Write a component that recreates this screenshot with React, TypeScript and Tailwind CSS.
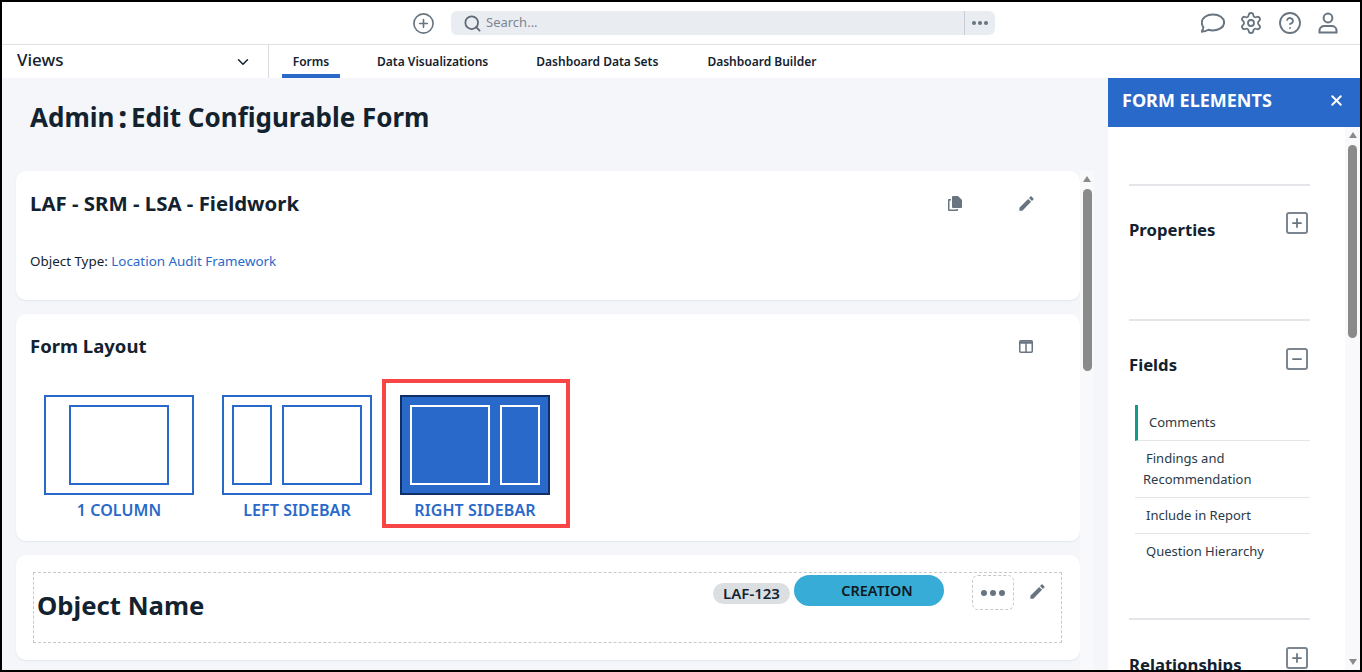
import React from "react";
import { CirclePlus, Search, Settings, CircleHelp, ChevronDown, X, Plus, Minus } from "lucide-react";
import { MdEdit } from "react-icons/md";

const font = { fontFamily: "'Noto Sans', 'Open Sans', sans-serif" };

function UserIcon() {
  return (
    <svg width="24" height="24" viewBox="0 0 24 24" fill="none" stroke="#68747f" strokeWidth="2">
      <circle cx="12" cy="7" r="4.4" />
      <path d="M3.5 21.5v-2.2c0-2.6 2.4-4.3 5-4.3h7c2.6 0 5 1.7 5 4.3v2.2z" />
    </svg>
  );
}

function ChatIcon() {
  return (
    <svg width="24" height="24" viewBox="2.5 1 21 21" fill="none" stroke="#68747f" strokeWidth="1.7" strokeLinejoin="round">
      <path d="M13 4c5.5 0 9.7 3 9.7 7s-4.2 7-9.7 7c-1.4 0-2.8-.2-4-.6-1.6 1-3.600 1.600-6.200 1.700 1-1.200 1.700-2.500 1.800-3.900C3.700 14 3.200 12.600 3.200 11c0-4 4.300-7 9.800-7z" />
    </svg>
  );
}

function CopyIcon() {
  return (
    <svg width="14" height="15" viewBox="0 0 14 15" fill="#68747f">
      <path d="M5 0h5l4 4v7a1 1 0 0 1-1 1H5a1 1 0 0 1-1-1V1a1 1 0 0 1 1-1z" />
      <path d="M3 3v1.500H1.500v9h7V13H10v1a1 1 0 0 1-1 1H1a1 1 0 0 1-1-1V4a1 1 0 0 1 1-1z" />
    </svg>
  );
}

function ColumnsIcon() {
  return (
    <svg width="14" height="13" viewBox="0 0 14 13" fill="none" stroke="#68747f">
      <rect x="0.75" y="0.75" width="12.5" height="11.5" rx="1" strokeWidth="1.5" />
      <path d="M1 2.500h12" strokeWidth="2.5" />
      <path d="M7 3v9" strokeWidth="1.5" />
    </svg>
  );
}

function Toggle({ open }: { open?: boolean }) {
  return (
    <span className="flex h-[22px] w-[22px] items-center justify-center rounded-[3px] border-[2.5px] border-[#7b8691] text-[#68747f]">
      {open ? <Minus size={14} strokeWidth={3} /> : <Plus size={14} strokeWidth={3} />}
    </span>
  );
}

function Layout({ label, variant }: { label: string; variant: "one" | "left" | "right" }) {
  const active = variant === "right";
  const inner = active ? "border-2 border-white" : "border-2 border-[#2969c9]";
  return (
    <div className="relative flex w-[150px] flex-col items-center">
      <div className={`flex h-[100px] w-[150px] items-center justify-center border-2 ${active ? "border-[#0f2f66] bg-[#2969c9]" : "border-[#2969c9] bg-white"} ${variant === "one" ? "" : "gap-[10px]"}`}>
        {variant === "one" && <div className={`h-[80px] w-[100px] ${inner}`} />}
        {variant === "left" && (
          <>
            <div className={`h-[80px] w-[40px] ${inner}`} />
            <div className={`h-[80px] w-[80px] ${inner}`} />
          </>
        )}
        {variant === "right" && (
          <>
            <div className={`h-[80px] w-[80px] ${inner}`} />
            <div className={`h-[80px] w-[40px] ${inner}`} />
          </>
        )}
      </div>
      <div className="mt-[5px] text-[16px] leading-[20px] font-semibold tracking-[0.1px] whitespace-nowrap text-[#2969c9]">{label}</div>
      {active && <div className="absolute -top-[16px] -right-[20px] -bottom-[8px] -left-[18px] border-4 border-[#f84646]" />}
    </div>
  );
}

function Card({ className, children }: { className: string; children: React.ReactNode }) {
  return <section className={`rounded-[10px] bg-white shadow-[0_1px_2px_rgba(30,50,90,0.08)] ${className}`}>{children}</section>;
}

function Field({ children, active }: { children: React.ReactNode; active?: boolean }) {
  return (
    <div className={`flex h-[36px] items-center border-b border-[#e3e5e8] text-[13px] text-[#2a3a47] ${active ? "border-l-[3px] border-l-[#0f9d8a] pt-[1px] pl-[11px]" : "pt-[1px] pl-[11px]"}`}>
      {children}
    </div>
  );
}

export default function App() {
  return (
    <div style={font} className="flex h-[672px] w-[1362px] flex-col overflow-hidden border-2 border-black bg-white text-[#13222f]">
      <header className="relative flex h-[43px] shrink-0 items-center border-b border-[#dfe1e4] bg-white">
        <div className="ml-[410px] text-[#68747f]"><CirclePlus size={23} strokeWidth={1.7} /></div>
        <div className="ml-[16px] flex h-[24px] w-[544px] items-center rounded-[6px] bg-[#e9ecf1] pl-[12px] text-[13px] text-[#7b8691]">
          <Search size={19} strokeWidth={2.2} className="text-[#5d6873]" />
          <span className="ml-[4px] flex-1">Search...</span>
          <span className="flex h-[24px] w-[31px] items-center justify-center gap-[2px] border-l border-[#c9cdd3]">
            <i className="h-[4px] w-[4px] rounded-full bg-[#68747f]" />
            <i className="h-[4px] w-[4px] rounded-full bg-[#68747f]" />
            <i className="h-[4px] w-[4px] rounded-full bg-[#68747f]" />
          </span>
        </div>
        <div className="mr-[20px] ml-auto flex items-center gap-[14px] text-[#68747f]">
          <ChatIcon />
          <Settings size={24} strokeWidth={1.8} className="mr-[1px]" />
          <CircleHelp size={24} strokeWidth={1.8} />
          <UserIcon />
        </div>
      </header>

      <nav className="flex h-[33px] shrink-0 items-stretch bg-white shadow-[0_1px_2px_rgba(30,50,90,0.1)]">
        <div className="flex w-[267px] items-center justify-between border-r border-[#d9dbde] pr-[16px] pl-[15px]">
          <span className="pb-[4px] text-[17px] font-medium text-[#13222f]">Views</span>
          <ChevronDown size={18} strokeWidth={2} className="text-[#13222f]" />
        </div>
        <div className="ml-[13px] flex items-stretch text-[12px] font-semibold text-[#13222f]">
          <div className="flex w-[58px] items-center justify-center border-y-4 border-t-transparent border-b-[#2969c9]">Forms</div>
          <div className="ml-[37px] flex items-center">Data Visualizations</div>
          <div className="ml-[48px] flex items-center">Dashboard Data Sets</div>
          <div className="ml-[49px] flex items-center">Dashboard Builder</div>
        </div>
      </nav>

      <div className="flex min-h-0 flex-1">
        <main className="flex min-w-0 flex-1 flex-col bg-[#f4f6fa]">
          <h1 className="mt-[19px] ml-[28px] flex h-[40px] shrink-0 items-center text-[26px] font-bold whitespace-nowrap text-[#13222f]">
            Admin<span className="mx-[4px] text-[30px] leading-none font-extrabold">:</span>Edit Configurable Form
          </h1>
          <div className="mt-[34px] flex min-h-0 flex-1 pl-[14px]">
            <div className="flex w-[1064px] shrink-0 flex-col gap-[14px]">
              <Card className="h-[129px] shrink-0 px-[14px]">
                <div className="flex h-[64px] items-center">
                  <h2 className="text-[20.4px] font-bold">LAF - SRM - LSA - Fieldwork</h2>
                  <span className="ml-auto"><CopyIcon /></span>
                  <span className="mr-[30px] ml-[55px] text-[#68747f]"><MdEdit size={19} /></span>
                </div>
                <p className="mt-[16px] text-[13.4px] text-[#13222f]">Object Type: <span className="text-[#2969c9]">Location Audit Framework</span></p>
              </Card>
              <Card className="h-[227px] shrink-0 px-[14px]">
                <div className="flex h-[64px] items-center">
                  <h2 className="text-[18.500px] font-bold">Form Layout</h2>
                  <span className="mr-[33px] ml-auto"><ColumnsIcon /></span>
                </div>
                <div className="mt-[17px] ml-[14px] flex gap-[28px]">
                  <Layout label="1 COLUMN" variant="one" />
                  <Layout label="LEFT SIDEBAR" variant="left" />
                  <Layout label="RIGHT SIDEBAR" variant="right" />
                </div>
              </Card>
              <Card className="h-[105px] shrink-0 pt-[17px] pr-[18px] pl-[17px]">
                <div className="flex h-[71px] items-start border border-dashed border-[#c6c8cb]">
                  <h2 className="mt-[14px] ml-[3px] text-[25.7px] font-bold whitespace-nowrap">Object Name</h2>
                  <div className="ml-auto flex items-start">
                    <span className="mt-[10px] flex h-[21px] w-[77px] items-center justify-center rounded-full bg-[#dcdfe2] text-[15px] font-semibold">LAF-123</span>
                    <span className="mt-[2px] ml-[4px] flex h-[31px] w-[150px] items-center justify-center rounded-full bg-[#36acd6] pl-[16px] text-[14.4px] font-semibold text-[#101820]">CREATION</span>
                    <span className="mt-[2px] ml-[28px] flex h-[35px] w-[42px] items-center justify-center gap-[3px] rounded-[6px] border border-dashed border-[#c6c8cb]">
                      <i className="h-[6px] w-[6px] rounded-full bg-[#68747f]" />
                      <i className="h-[6px] w-[6px] rounded-full bg-[#68747f]" />
                      <i className="h-[6px] w-[6px] rounded-full bg-[#68747f]" />
                    </span>
                    <span className="mt-[9px] mr-[14px] ml-[14px] text-[#68747f]"><MdEdit size={19} /></span>
                  </div>
                </div>
              </Card>
            </div>
            <div className="flex w-[14px] shrink-0 flex-col items-center bg-[#f9f9fb] pt-[5px]">
              <span className="h-0 w-0 border-x-[4px] border-b-[6px] border-x-transparent border-b-[#8a8a8a]" />
              <span className="mt-[7px] h-[182px] w-[9px] rounded-full bg-[#8a8a8a]" />
            </div>
          </div>
        </main>

        <aside className="flex w-[252px] shrink-0 flex-col bg-white">
          <div className="flex h-[49px] shrink-0 items-center justify-between bg-[#2969c9] pr-[15px] pb-[4px] pl-[14px] text-white">
            <span className="text-[18px] font-bold">FORM ELEMENTS</span>
            <X size={17} strokeWidth={2.8} />
          </div>
          <div className="flex min-h-0 flex-1">
            <div className="ml-[21px] w-[181px] shrink-0 overflow-hidden pt-[57px]">
              <div className="h-[135px] border-t-2 border-[#e3e5e8]">
                <div className="mt-[26px] flex items-start justify-between pr-[2px]">
                  <h3 className="mt-[5px] text-[16.7px] font-bold">Properties</h3>
                  <Toggle />
                </div>
              </div>
              <div className="h-[299px] border-t-2 border-[#e3e5e8]">
                <div className="mt-[27px] flex items-start justify-between pr-[2px]">
                  <h3 className="mt-[4px] text-[16.7px] font-bold">Fields</h3>
                  <Toggle open />
                </div>
                <div className="mt-[28px] ml-[6px]">
                  <Field active>Comments</Field>
                  <div className="border-b border-[#e3e5e8] py-[7px] text-[13px] leading-[21px] text-[#2a3a47]">
                    <div className="pl-[11px]">Findings and</div>
                    <div className="pl-[8px]">Recommendation</div>
                  </div>
                  <Field>Include in Report</Field>
                  <div className="flex h-[36px] items-center pl-[11px] text-[13px] text-[#2a3a47]">Question Hierarchy</div>
                </div>
              </div>
              <div className="border-t-2 border-[#e3e5e8]">
                <div className="mt-[27px] flex items-start justify-between pr-[2px]">
                  <h3 className="mt-[5px] text-[16.7px] font-bold">Relationships</h3>
                  <Toggle />
                </div>
              </div>
            </div>
            <div className="ml-auto flex w-[15px] shrink-0 flex-col items-center bg-[#f9f9fb] pt-[5px]">
              <span className="h-0 w-0 border-x-[4px] border-b-[6px] border-x-transparent border-b-[#8a8a8a]" />
              <span className="mt-[7px] h-[193px] w-[9px] rounded-full bg-[#8a8a8a]" />
              <span className="mt-auto mb-[5px] h-0 w-0 border-x-[4px] border-t-[6px] border-x-transparent border-t-[#8a8a8a]" />
            </div>
          </div>
        </aside>
      </div>
    </div>
  );
}
